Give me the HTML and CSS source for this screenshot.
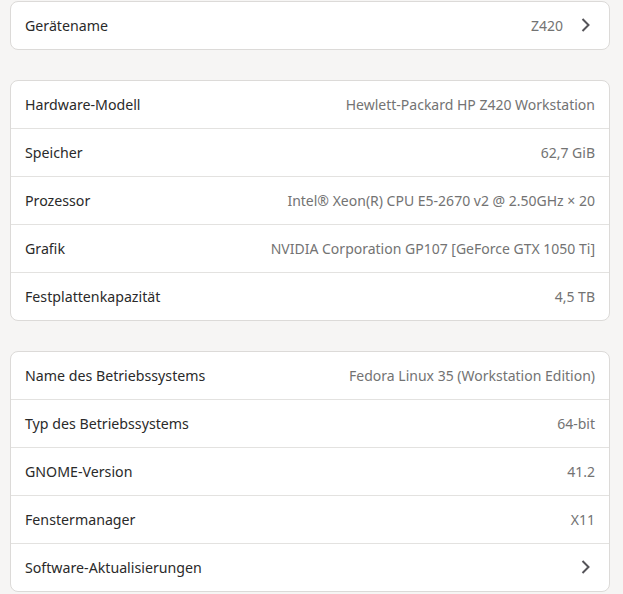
FILE: index.html
```html
<!DOCTYPE html>
<html lang="de">
<head>
<meta charset="utf-8">
<link rel="stylesheet" href="styles.css">
</head>
<body>
<main class="page">
  <section class="card">
    <div class="row link">
      <span class="label">Gerätename</span>
      <span class="value">Z420</span>
      <svg class="chev" width="16" height="16" viewBox="0 0 16 16"><path d="M5.5 2 L11.5 8 L5.5 14" fill="none" stroke="currentColor" stroke-width="2"/></svg>
    </div>
  </section>
  <section class="card">
    <div class="row"><span class="label">Hardware-Modell</span><span class="value">Hewlett-Packard HP Z420 Workstation</span></div>
    <div class="row"><span class="label">Speicher</span><span class="value">62,7 GiB</span></div>
    <div class="row"><span class="label">Prozessor</span><span class="value">Intel® Xeon(R) CPU E5-2670 v2 @ 2.50GHz × 20</span></div>
    <div class="row"><span class="label">Grafik</span><span class="value">NVIDIA Corporation GP107 [GeForce GTX 1050 Ti]</span></div>
    <div class="row"><span class="label">Festplattenkapazität</span><span class="value">4,5 TB</span></div>
  </section>
  <section class="card">
    <div class="row"><span class="label">Name des Betriebssystems</span><span class="value">Fedora Linux 35 (Workstation Edition)</span></div>
    <div class="row"><span class="label">Typ des Betriebssystems</span><span class="value">64-bit</span></div>
    <div class="row"><span class="label">GNOME-Version</span><span class="value">41.2</span></div>
    <div class="row"><span class="label">Fenstermanager</span><span class="value">X11</span></div>
    <div class="row link">
      <span class="label">Software-Aktualisierungen</span>
      <svg class="chev" width="16" height="16" viewBox="0 0 16 16"><path d="M5.5 2 L11.5 8 L5.5 14" fill="none" stroke="currentColor" stroke-width="2"/></svg>
    </div>
  </section>
</main>
</body>
</html>
```
FILE: styles.css
```css
html, body {
  margin: 0;
  padding: 0;
  background: #f6f5f4;
}
body {
  font-family: "Noto Sans", "Open Sans", sans-serif;
  font-size: 14.2px;
  color: #2a2a2a;
}
.page {
  display: flex;
  flex-direction: column;
  gap: 30px;
  padding: 1px 13px 0 10px;
}
.card {
  background: #ffffff;
  border: 1px solid #dcdad8;
  border-radius: 8px;
  overflow: hidden;
}
.row {
  height: 47px;
  display: flex;
  align-items: center;
  padding: 0 14px 1px;
  box-sizing: border-box;
  border-top: 1px solid #e3e2e0;
}
.card .row:first-child {
  height: 47px;
  border-top: none;
}
.row + .row {
  height: 48px;
}
.label {
  flex: 1;
  white-space: nowrap;
}
.value {
  font-size: 14px;
  color: #737373;
  white-space: nowrap;
}
.link .value {
  margin-right: 14px;
}
.chev {
  color: #555459;
  margin-right: 2px;
}
```
